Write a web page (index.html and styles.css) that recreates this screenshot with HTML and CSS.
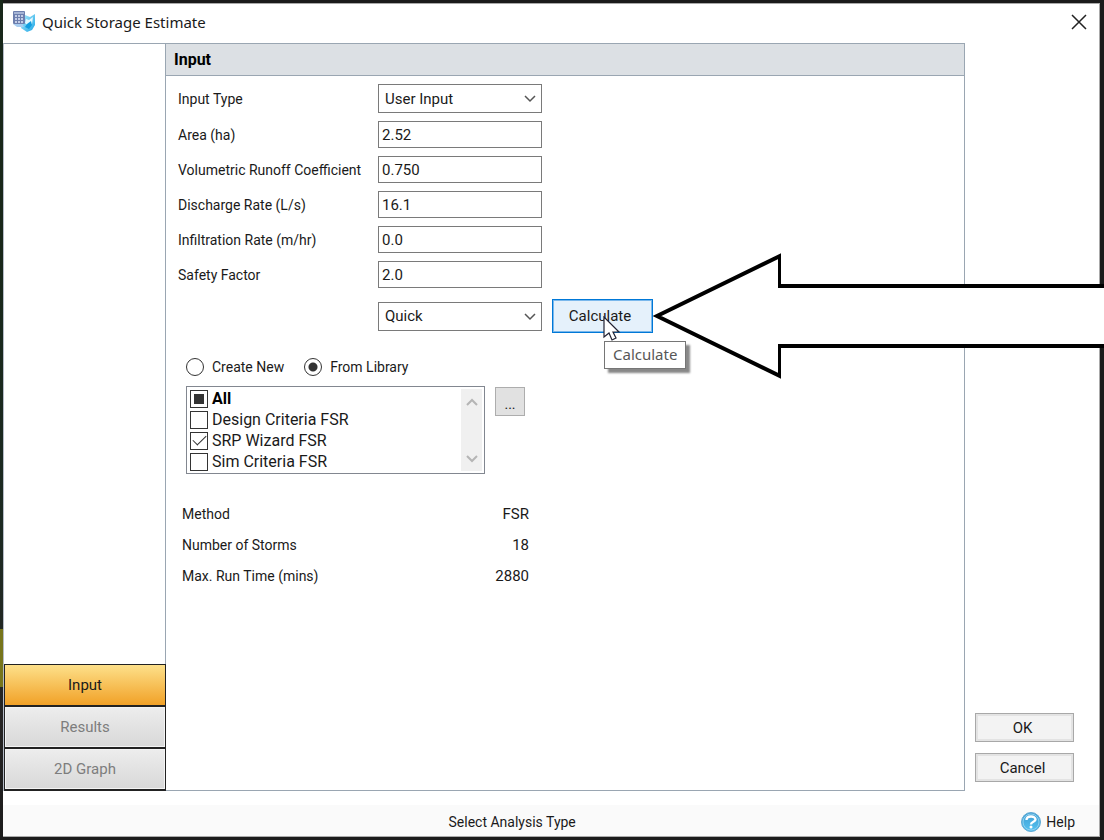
FILE: index.html
```html
<!DOCTYPE html>
<html lang="en">
<head>
<meta charset="utf-8">
<title>Quick Storage Estimate</title>
<link rel="stylesheet" href="styles.css">
</head>
<body>
<div class="desktop">
  <main class="window">
    <header class="titlebar">
      <svg class="app-icon" viewBox="0 0 24 24" aria-hidden="true">
        <defs>
          <linearGradient id="drop" x1="0" y1="0" x2="1" y2="1"><stop offset="0" stop-color="#b4ecfb"/><stop offset="1" stop-color="#1ba6e6"/></linearGradient>
        </defs>
        <path d="M13 5l5 2 5-3v11l-3 5-5 2-6-4z" fill="url(#drop)"/>
        <path d="M14 9l3 1 4-3-1 7-3 2-4-3z" fill="#e4f8ff"/>
        <path d="M15 14l4-3 1 4-3 4-4-2z" fill="#129ddf"/>
        <rect x="1" y="1" width="12" height="13" rx="1" fill="#6d7fae"/>
        <path d="M2 3h10" stroke="#b9c6e2" stroke-width="1.500"/>
        <path d="M3 6h9M3 9h9M3 12h9" stroke="#c3cde6" stroke-width="2" stroke-dasharray="2 1"/>
        <path d="M1 14h9l2 3H5z" fill="#a9cdf0"/>
      </svg>
      <h1>Quick Storage Estimate</h1>
      <button class="close" type="button" aria-label="Close"><svg viewBox="0 0 16 16"><path d="M1 1l14 14M15 1L1 15"/></svg></button>
    </header>

    <div class="body">
      <nav class="tabs" aria-label="Pages">
        <button type="button" class="tab active">Input</button>
        <button type="button" class="tab">Results</button>
        <button type="button" class="tab">2D Graph</button>
      </nav>

      <section class="panel">
        <h2>Input</h2>
        <form class="content">
          <div class="fields">
            <label for="type">Input Type</label>
            <span class="combo"><select id="type"><option>User Input</option></select><svg viewBox="0 0 12 8"><path d="M1 1l5 5 5-5"/></svg></span>
            <label for="area">Area (ha)</label><input id="area" type="text" value="2.52">
            <label for="coef">Volumetric Runoff Coefficient</label><input id="coef" type="text" value="0.750">
            <label for="rate">Discharge Rate (L/s)</label><input id="rate" type="text" value="16.1">
            <label for="infil">Infiltration Rate (m/hr)</label><input id="infil" type="text" value="0.0">
            <label for="safety">Safety Factor</label><input id="safety" type="text" value="2.0">
          </div>
          <div class="run">
            <span class="combo"><select aria-label="Calculation mode"><option>Quick</option></select><svg viewBox="0 0 12 8"><path d="M1 1l5 5 5-5"/></svg></span>
            <div class="calc">
              <button type="button" class="calculate">Calculate</button>
              <span class="tip" role="tooltip">Calculate</span>
              <svg class="cursor" viewBox="0 0 18 26" aria-hidden="true"><path d="M1 1v20l5-4 3 7 4-2-3-6h6z"/></svg>
            </div>
          </div>

          <div class="source">
            <label><input type="radio" name="src">Create New</label>
            <label><input type="radio" name="src" checked>From Library</label>
          </div>
          <div class="library">
            <div class="listbox">
              <div class="items">
                <label class="all"><input type="checkbox" class="mixed">All</label>
                <label><input type="checkbox">Design Criteria FSR</label>
                <label><input type="checkbox" checked>SRP Wizard FSR</label>
                <label><input type="checkbox">Sim Criteria FSR</label>
              </div>
              <div class="scroll" aria-hidden="true">
                <svg viewBox="0 0 12 8"><path d="M1 7l5-5 5 5"/></svg>
                <svg viewBox="0 0 12 8"><path d="M1 1l5 5 5-5"/></svg>
              </div>
            </div>
            <button type="button" class="browse" aria-label="Browse library">...</button>
          </div>

          <dl class="summary">
            <dt>Method</dt><dd>FSR</dd>
            <dt>Number of Storms</dt><dd>18</dd>
            <dt>Max. Run Time (mins)</dt><dd>2880</dd>
          </dl>
        </form>
      </section>

      <aside class="actions">
        <button type="button">OK</button>
        <button type="button">Cancel</button>
      </aside>
    </div>

    <footer class="status">
      <span class="message">Select Analysis Type</span>
      <a class="help" href="#help">
        <svg viewBox="0 0 20 20" aria-hidden="true">
          <defs><linearGradient id="ball" x1="0" y1="0" x2="0" y2="1"><stop offset="0" stop-color="#3d9cd2"/><stop offset="1" stop-color="#55c3f2"/></linearGradient></defs>
          <circle cx="10" cy="10" r="9.500" fill="url(#ball)" stroke="#5fa9d4"/>
          <circle cx="10" cy="10" r="8" fill="none" stroke="#8fd0ef"/>
          <path d="M5.500 8c0-4.500 9-4.500 9-.5 0 2.500-4.500 2-4.500 5" fill="none" stroke="#fff" stroke-width="2.400"/>
          <circle cx="10" cy="15" r="1.500" fill="#fff"/>
        </svg>Help</a>
    </footer>
  </main>

  <div class="pointer" aria-hidden="true">
    <svg viewBox="0 0 128 126"><path d="M128 33H127V3L4 63l123 60V93h1" fill="#fff" stroke="#000" stroke-width="4"/></svg>
    <div class="shaft"></div>
  </div>
</div>
</body>
</html>
```
FILE: styles.css
```css
* { box-sizing: border-box; }

body {
  margin: 0;
  font-family: Roboto, "Liberation Sans", sans-serif;
  font-size: 14px;
  line-height: 20px;
  color: #1a1a1a;
}

button, input, select { font: inherit; color: inherit; }
button { padding: 0; }

.desktop {
  position: relative;
  display: flex;
  min-height: 100vh;
  padding: 3px 4px 3px 3px;
  overflow: hidden;
  background:
    linear-gradient(#18271a 0 30%, #1c2a22 62%, #262424 86%, #1b1b1b) 0 0 / 3px 100% no-repeat,
    #1b1b1b;
}

.desktop::before {
  content: "";
  position: absolute;
  left: 0;
  bottom: 153px;
  width: 3px;
  height: 58px;
  background: #77751c;
}

.window {
  display: flex;
  flex: 1;
  flex-direction: column;
  background: #fff;
  border: 1px solid #aaa;
  border-left: 0;
}

.titlebar {
  display: flex;
  align-items: center;
  height: 39px;
  padding: 0 12px 4px 9px;
}

.app-icon { width: 24px; height: 24px; margin-right: 6px; }

h1 {
  flex: 1;
  margin: 0;
  font: 15px/20px "Noto Sans", "Open Sans", sans-serif;
}

.close { display: flex; padding: 0; border: 0; background: none; }
.close svg { width: 16px; height: 16px; stroke: #222; stroke-width: 1.5; }

.body { display: flex; flex: 1; }

.tabs {
  display: flex;
  flex-direction: column;
  justify-content: flex-end;
  width: 162px;
  border-top: 1px solid #9aa6b2;
  border-left: 1px solid #b5bcc8;
}

.tab {
  height: 43px;
  margin: 0 -1px -1px 0;
  border: 1px solid #222;
  border-width: 1px 1px 2px;
  background: linear-gradient(#ededed, #d8d8d8);
  box-shadow: inset 0 0 0 1px #f4f4f4;
  color: #7d7d7d;
  font-size: 15px;
  z-index: 1;
}
.tab:last-child { margin-bottom: 0; }
.tab.active {
  background: linear-gradient(#fde08a, #f1a127);
  box-shadow: none;
  color: #1a1a1a;
}

.panel {
  flex: 1;
  border: 1px solid #9aa6b2;
}

h2 {
  margin: 0;
  padding: 6px 8px 5px;
  border-bottom: 1px solid #9aa6b2;
  background: #dce0e4;
  color: #000;
  font-size: 16px;
  line-height: 20px;
}

.content { padding: 8px 12px; }

.fields {
  display: grid;
  grid-template-columns: 192px 164px;
  gap: 8px;
  align-items: center;
}

.fields label { white-space: nowrap; }

.fields input, .combo select {
  display: block;
  width: 100%;
  height: 27px;
  padding: 0 3px;
  border: 1px solid #7a7a7a;
  border-radius: 0;
  background: #fff;
  font-size: 15px;
  appearance: none;
}

.combo { position: relative; width: 164px; }
.combo select { height: 29px; padding: 0 6px; }
.combo svg {
  position: absolute;
  top: 11px;
  right: 6px;
  width: 12px;
  height: 8px;
  pointer-events: none;
}
.combo path, .scroll path { fill: none; stroke: #555; stroke-width: 1.5; }

.run {
  display: flex;
  gap: 10px;
  align-items: center;
  margin: 11px 0 0 200px;
}

.calc { position: relative; }
.calculate {
  display: block;
  width: 101px;
  height: 34px;
  padding-right: 5px;
  border: 1px solid #0078d7;
  background: #e5f1fb;
  box-shadow: inset 0 0 0 1px #7ab8ec;
  font-size: 15px;
}

.tip {
  position: absolute;
  top: 42px;
  left: 52px;
  padding: 2px 8px 3px;
  border: 1px solid #767676;
  background: #fff;
  box-shadow: 4px 4px 2px #888;
  color: #575757;
  font: 15px/21px "Noto Sans", "Open Sans", sans-serif;
}

.cursor {
  position: absolute;
  top: 17px;
  left: 51px;
  width: 18px;
  height: 26px;
  fill: #fff;
  stroke: #223;
  stroke-width: 1.2;
}

.source { display: flex; gap: 20px; margin: 24px 0 0 8px; }
.source label { display: flex; gap: 8px; align-items: center; }
.source input {
  width: 18px;
  height: 18px;
  margin: 0;
  border: 1px solid #333;
  border-radius: 50%;
  appearance: none;
}
.source input:checked { background: radial-gradient(circle, #333 0 4px, #fff 5px); }

.library { display: flex; gap: 10px; align-items: flex-start; margin: 9px 0 0 8px; }

.listbox {
  display: flex;
  width: 299px;
  padding: 1px 2px 1px 3px;
  border: 1px solid #828790;
}
.items { flex: 1; font-size: 16px; }
.items label { display: flex; gap: 4px; align-items: center; height: 21px; }
.items .all { color: #000; font-weight: bold; }
.items input {
  display: grid;
  place-items: center;
  width: 18px;
  height: 18px;
  margin: 0;
  border: 1px solid #333;
  appearance: none;
}
.items .mixed::before { content: ""; width: 10px; height: 10px; background: #333; }
.items input:checked::before {
  content: "";
  width: 12px;
  height: 6px;
  margin-bottom: 4px;
  border: solid #333;
  border-width: 0 0 1px 1px;
  transform: rotate(-45deg);
}

.scroll {
  display: flex;
  flex-direction: column;
  justify-content: space-between;
  align-items: center;
  width: 21px;
  margin: 1px 0;
  padding: 9px 0 8px;
  background: #f0f0f0;
}
.scroll svg { width: 12px; height: 8px; }
.scroll path { stroke: #b5b5b5; stroke-width: 2; }

.browse {
  width: 30px;
  height: 29px;
  margin-top: 1px;
  padding-top: 4px;
  border: 1px solid #adadad;
  background: #e1e1e1;
}

.summary {
  display: grid;
  grid-template-columns: 1fr auto;
  gap: 11px;
  width: 347px;
  margin: 30px 0 0 4px;
}
.summary dd { margin: 0; text-align: right; font-size: 15px; }

.actions {
  display: flex;
  flex-direction: column;
  gap: 11px;
  justify-content: flex-end;
  width: 134px;
  padding: 0 25px 9px 10px;
}
.actions button {
  height: 29px;
  padding-right: 4px;
  border: 1px solid #a8a8a8;
  background: #f3f3f3;
  box-shadow: inset 0 0 0 2px #e3e3e3;
  font-size: 15px;
}

.status {
  display: grid;
  grid-template-columns: 1fr auto;
  align-items: center;
  height: 31px;
  margin-top: 14px;
  padding: 2px 24px 0 0;
  background: #fafafa;
}
.message { text-align: center; }
.help { display: flex; gap: 5px; align-items: center; color: inherit; text-decoration: none; }
.help svg { width: 20px; height: 20px; }

/* Callout arrow laid over the dialog, running off the right edge */
.pointer {
  position: absolute;
  top: 253px;
  right: 0;
  left: 653px;
  display: flex;
  align-items: center;
  pointer-events: none;
}
.pointer svg { width: 128px; height: 126px; }
.shaft {
  flex: 1;
  height: 64px;
  margin-left: -3px;
  border: solid #000;
  border-width: 4px 0;
  background: #fff;
}
```
